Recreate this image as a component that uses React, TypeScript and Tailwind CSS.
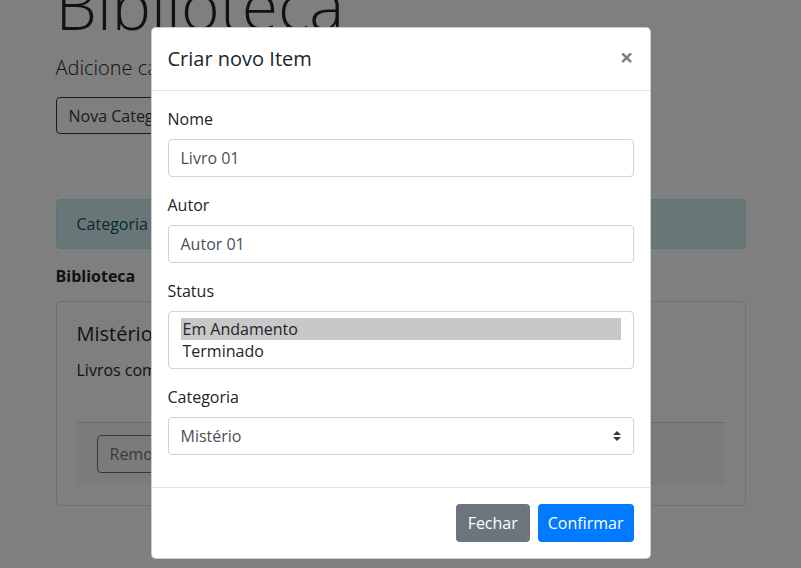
const font = "font-['Open_Sans','Noto_Sans',sans-serif]";

function Background() {
  return (
    <div className="mx-auto w-[690px] text-[#212529]">
      <h1 className="-mt-[35px] mb-[9px] text-[66px] font-light leading-[1.2]">Biblioteca</h1>
      <p className="mb-[14px] text-[20px] font-light leading-[30px]">
        Adicione categorias e livros à sua biblioteca
      </p>
      <button className="h-[37px] rounded border border-[#343a40] px-3 text-[16px] text-[#343a40]">
        Nova Categoria
      </button>
      <div className="mt-[65px] mb-[15px] rounded border border-[#bee5eb] bg-[#d1ecf1] px-5 py-3 leading-6 text-[#0c5460]">
        Categoria criada com sucesso!
      </div>
      <div className="mb-[13px] text-[16px] leading-6 font-bold">Biblioteca</div>
      <div className="rounded border border-black/[.125] p-5">
        <h5 className="mb-3 text-[20px] leading-6 font-medium">Mistério</h5>
        <p className="leading-6">Livros com suspense e investigação</p>
        <div className="mt-10 border-t border-black/[.125] bg-black/[.03] px-5 py-3">
          <button className="h-[38px] rounded border border-[#6c757d] px-3 text-[#6c757d]">
            Remover
          </button>
        </div>
      </div>
    </div>
  );
}

function Field({ label, children }: { label: string; children: React.ReactNode }) {
  return (
    <div className="mb-4">
      <label className="mb-2 block leading-6">{label}</label>
      {children}
    </div>
  );
}

function TextInput({ value }: { value: string }) {
  return (
    <div className="flex h-[38px] items-center rounded border border-[#ced4da] px-3 text-[#495057]">
      {value}
    </div>
  );
}

function Modal() {
  return (
    <div className="mx-auto mt-[27px] w-[500px] rounded-[5px] border border-black/20 bg-white text-[#212529]">
      <div className="flex h-[63px] items-center justify-between border-b border-[#dee2e6] px-4">
        <h5 className="text-[20px] leading-[30px] font-medium">Criar novo Item</h5>
        <span className="-mt-1 text-[24px] leading-none font-bold text-black/50">×</span>
      </div>
      <div className="p-4 pb-0">
        <Field label="Nome">
          <TextInput value="Livro 01" />
        </Field>
        <Field label="Autor">
          <TextInput value="Autor 01" />
        </Field>
        <Field label="Status">
          <div className="h-[58px] rounded border border-[#ced4da] px-3 py-[6px] text-[#212529]">
            <div className="h-[22px] bg-[#c8c8c8] px-[2px] leading-[22px]">Em Andamento</div>
            <div className="h-[22px] px-[2px] leading-[22px]">Terminado</div>
          </div>
        </Field>
        <Field label="Categoria">
          <div className="flex h-[38px] items-center justify-between rounded border border-[#ced4da] px-3 text-[#495057]">
            <span>Mistério</span>
            <svg width="8" height="10" viewBox="0 0 4 5">
              <path fill="#343a40" d="M2 0L0 2h4zm0 5L0 3h4z" />
            </svg>
          </div>
        </Field>
        <div className="h-4" />
      </div>
      <div className="flex justify-end gap-2 border-t border-[#dee2e6] px-4 py-4">
        <button className="h-[38px] rounded bg-[#6c757d] px-3 text-white">Fechar</button>
        <button className="h-[38px] rounded bg-[#007bff] px-[10px] text-white">Confirmar</button>
      </div>
    </div>
  );
}

export default function App() {
  return (
    <div className={`relative h-[568px] overflow-hidden bg-white text-[16px] ${font}`}>
      <Background />
      <div className="absolute inset-0 bg-black/50">
        <Modal />
      </div>
    </div>
  );
}
